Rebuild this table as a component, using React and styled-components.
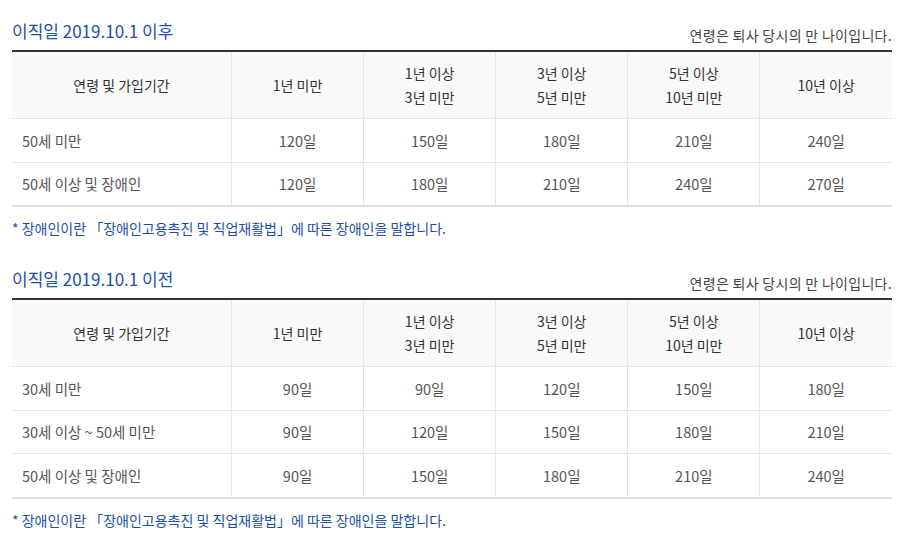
import styled, { createGlobalStyle } from "styled-components";

const GlobalStyle = createGlobalStyle`
  body {
    margin: 0;
    background: #ffffff;
    font-family: "Noto Sans CJK KR", "Noto Sans", sans-serif;
  }
`;

const Page = styled.div`
  width: 880px;
  padding: 12px 0 0 12px;
`;

const Section = styled.section`
  margin-bottom: 22px;
`;

const TitleBar = styled.div`
  display: flex;
  justify-content: space-between;
  align-items: flex-end;
  height: 38px;
`;

const Title = styled.h3`
  margin: 0 0 7px 0;
  font-size: 17px;
  font-weight: 400;
  color: #1d4fa8;
  line-height: 24px;
`;

const Caption = styled.span`
  font-size: 14px;
  color: #444;
  line-height: 20px;
  margin-bottom: 5px;
  letter-spacing: 0.3px;
`;

const Table = styled.table`
  width: 880px;
  border-collapse: collapse;
  table-layout: fixed;
  border-top: 2px solid #333;
  border-bottom: 2px solid #dedede;
  font-size: 14.5px;
  color: #555;
`;

const Th = styled.th`
  height: 66px;
  padding: 0;
  background: #f9f9f9;
  font-size: 14px;
  font-weight: 400;
  color: #333;
  line-height: 24px;
  text-align: center;
  border-bottom: 1px solid #e5e5e5;
  border-left: 1px solid #e5e5e5;
  &:first-child {
    border-left: none;
    width: 219px;
  }
`;

const Td = styled.td`
  height: 42.5px;
  padding: 0;
  text-align: ${({ $left }) => ($left ? "left" : "center")};
  padding-left: ${({ $left }) => ($left ? "10px" : "0")};
  border-bottom: 1px solid #e5e5e5;
  border-left: 1px solid #e5e5e5;
  &:first-child {
    border-left: none;
  }
`;

const Note = styled.p`
  margin: 11px 0 0 0;
  font-size: 14px;
  color: #1d4fa8;
  line-height: 20px;
`;

const headers = [
  ["연령 및 가입기간"],
  ["1년 미만"],
  ["1년 이상", "3년 미만"],
  ["3년 이상", "5년 미만"],
  ["5년 이상", "10년 미만"],
  ["10년 이상"],
];

const tables = [
  {
    title: "이직일 2019.10.1 이후",
    rows: [
      ["50세 미만", "120일", "150일", "180일", "210일", "240일"],
      ["50세 이상 및 장애인", "120일", "180일", "210일", "240일", "270일"],
    ],
  },
  {
    title: "이직일 2019.10.1 이전",
    rows: [
      ["30세 미만", "90일", "90일", "120일", "150일", "180일"],
      ["30세 이상 ~ 50세 미만", "90일", "120일", "150일", "180일", "210일"],
      ["50세 이상 및 장애인", "90일", "150일", "180일", "210일", "240일"],
    ],
  },
];

export default function App() {
  return (
    <Page>
      <GlobalStyle />
      {tables.map((t) => (
        <Section key={t.title}>
          <TitleBar>
            <Title>{t.title}</Title>
            <Caption>연령은 퇴사 당시의 만 나이입니다.</Caption>
          </TitleBar>
          <Table>
            <thead>
              <tr>
                {headers.map((h, i) => (
                  <Th key={i}>
                    {h.map((line, j) => (
                      <div key={j}>{line}</div>
                    ))}
                  </Th>
                ))}
              </tr>
            </thead>
            <tbody>
              {t.rows.map((r, i) => (
                <tr key={i}>
                  {r.map((c, j) => (
                    <Td key={j} $left={j === 0}>
                      {c}
                    </Td>
                  ))}
                </tr>
              ))}
            </tbody>
          </Table>
          <Note>* 장애인이란 「장애인고용촉진 및 직업재활법」에 따른 장애인을 말합니다.</Note>
        </Section>
      ))}
    </Page>
  );
}
